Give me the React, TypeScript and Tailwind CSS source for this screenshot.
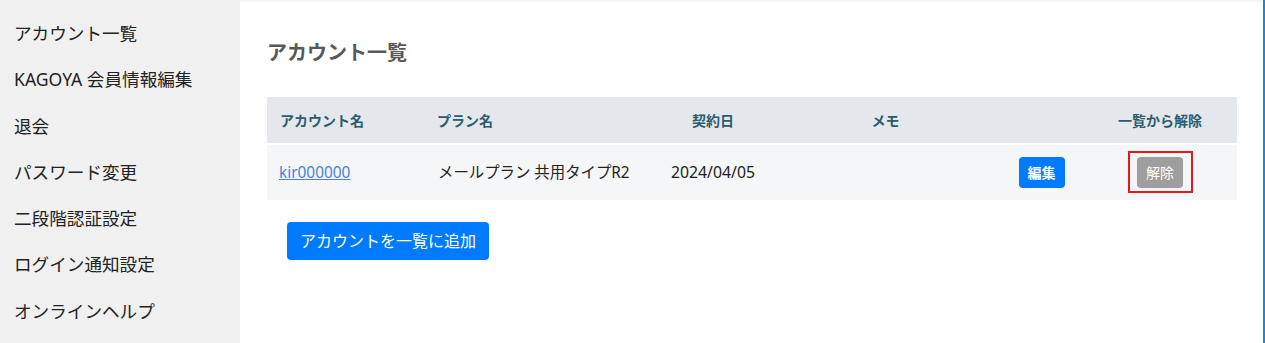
import React from "react";

const menu = [
  "アカウント一覧",
  "KAGOYA 会員情報編集",
  "退会",
  "パスワード変更",
  "二段階認証設定",
  "ログイン通知設定",
  "オンラインヘルプ",
];

export default function App() {
  return (
    <div
      className="flex h-[343px] w-full overflow-hidden bg-white"
      style={{ fontFamily: '"Noto Sans", "Noto Sans CJK JP", sans-serif' }}
    >
      <aside className="w-[240px] shrink-0 bg-[#f0f0f0] pt-[10px]">
        {menu.map((m) => (
          <div
            key={m}
            className="h-[46.3px] pl-[14px] text-[17.6px] leading-[46.3px] text-[#222]"
          >
            {m}
          </div>
        ))}
      </aside>
      <main className="flex-1 border-r-2 border-[#1587dc] pl-[27px] pr-[26px] pt-[40px] shadow-[inset_0_3px_3px_-2px_rgba(0,0,0,0.07)]">
        <h1 className="text-[20px] font-bold leading-[26px] text-[#585858]">
          アカウント一覧
        </h1>
        <div className="mt-[31px] w-[970px]">
          <div className="grid h-[46px] grid-cols-[158px_230px_116px_229px_83px_154px] items-center bg-[#e4e7eb] text-[14px] font-bold text-[#2b5c6b]">
            <div className="pl-[13px]">アカウント名</div>
            <div className="pl-[12px]">プラン名</div>
            <div className="text-center">契約日</div>
            <div className="text-center">メモ</div>
            <div></div>
            <div className="text-center">一覧から解除</div>
          </div>
          <div className="mt-[2px] grid h-[55px] grid-cols-[158px_230px_116px_229px_83px_154px] items-center bg-[#f5f6f8] text-[15.4px] text-[#222]">
            <div className="pl-[12px]">
              <a href="#" className="text-[#4a7fe6] underline">
                kir000000
              </a>
            </div>
            <div className="pl-[13px]">メールプラン 共用タイプR2</div>
            <div className="text-center text-[15.8px]">2024/04/05</div>
            <div></div>
            <div className="flex justify-center">
              <button className="h-[31px] w-[46px] rounded-[4px] bg-[#007bff] text-[14px] font-bold leading-none text-white">
                編集
              </button>
            </div>
            <div className="flex justify-center">
              <div className="relative">
                <button className="h-[31px] w-[46px] rounded-[4px] bg-[#9e9e9e] text-[14px] leading-none text-white">
                  解除
                </button>
                <span className="pointer-events-none absolute -bottom-[5px] -left-[9px] -right-[10px] -top-[6px] border-2 border-[#e8161f]"></span>
              </div>
            </div>
          </div>
          <button className="ml-[20px] mt-[22px] h-[38px] w-[202px] rounded-[4px] bg-[#007bff] text-[16px] leading-none text-white">
            アカウントを一覧に追加
          </button>
        </div>
      </main>
    </div>
  );
}
